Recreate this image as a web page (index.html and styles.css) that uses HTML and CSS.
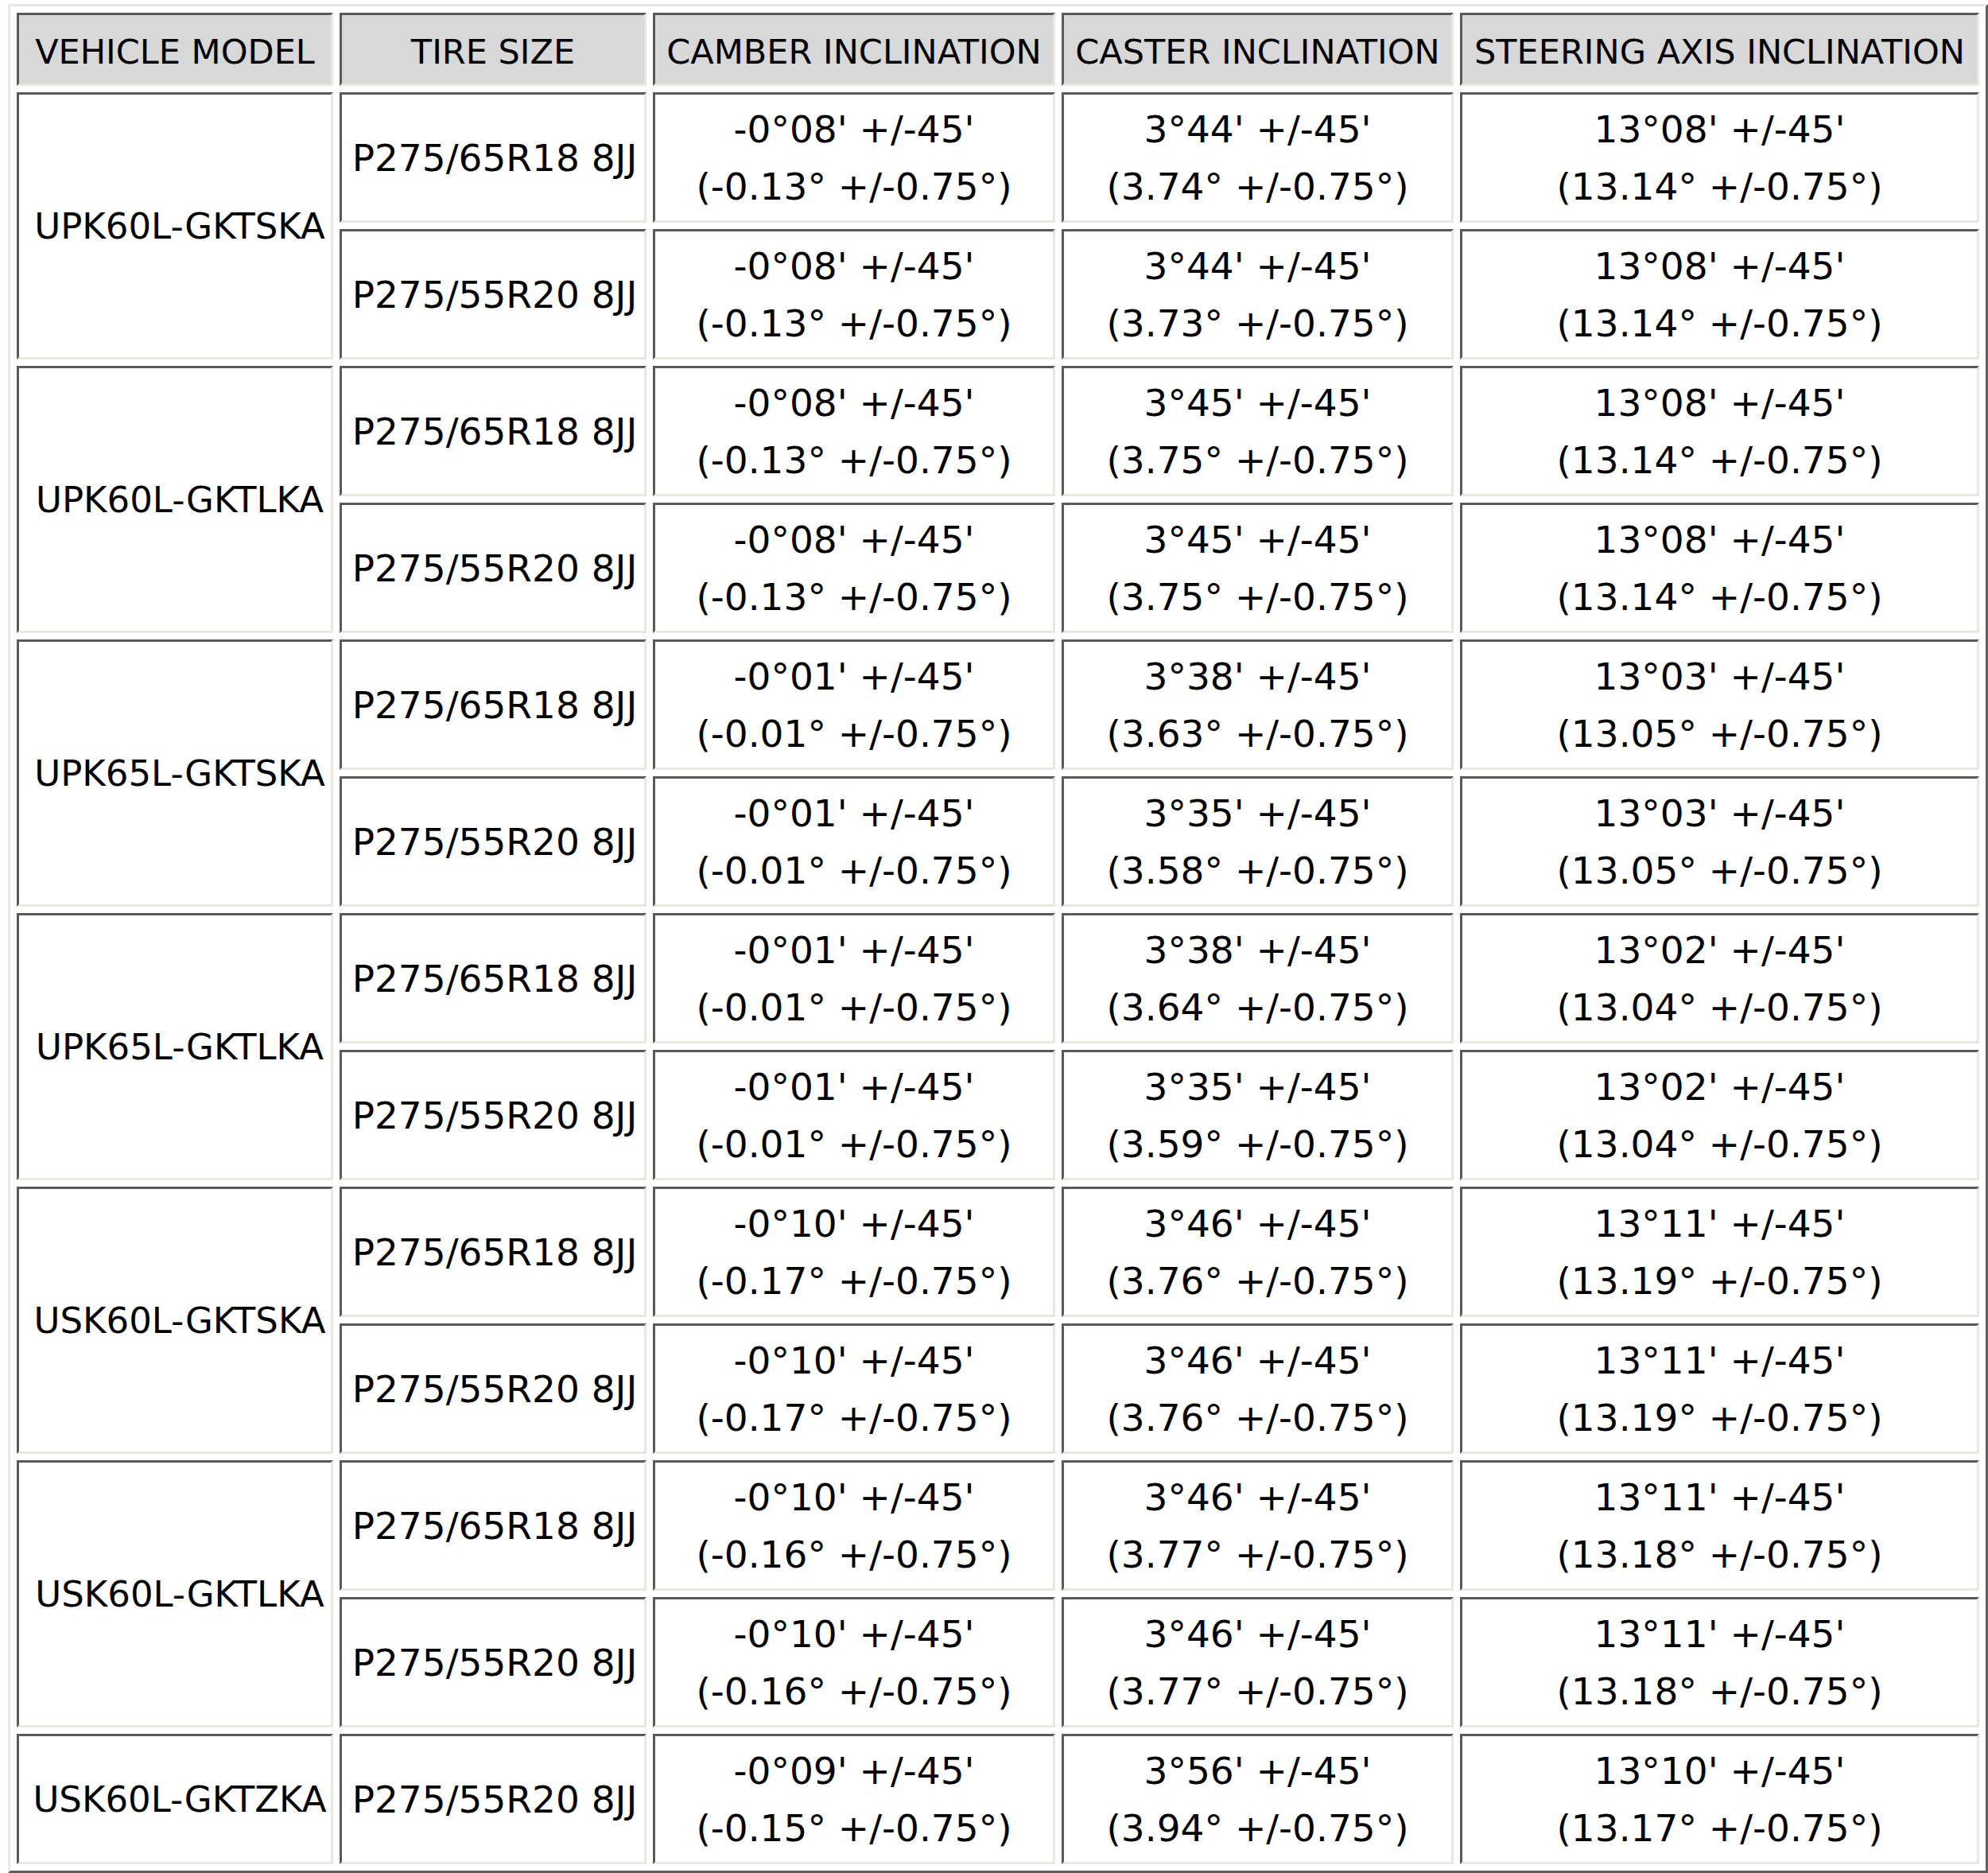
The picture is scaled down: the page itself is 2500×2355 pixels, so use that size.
FILE: index.html
```html
<!DOCTYPE html>
<html>
<head>
<meta charset="utf-8">
<link rel="stylesheet" href="styles.css">
</head>
<body>
<table class="spec">
<colgroup>
<col class="c-model"><col class="c-tire"><col class="c-camber"><col class="c-caster"><col class="c-sai">
</colgroup>
<thead>
<tr class="head">
<th>VEHICLE MODEL</th><th>TIRE SIZE</th><th>CAMBER INCLINATION</th><th>CASTER INCLINATION</th><th>STEERING AXIS INCLINATION</th>
</tr>
</thead>
<tbody>
<tr>
<td class="model" rowspan="2">UPK60L-GKTSKA</td><td class="tire">P275/65R18 8JJ</td>
<td>-0°08' +/-45'<br>(-0.13° +/-0.75°)</td><td>3°44' +/-45'<br>(3.74° +/-0.75°)</td><td>13°08' +/-45'<br>(13.14° +/-0.75°)</td>
</tr>
<tr>
<td class="tire">P275/55R20 8JJ</td>
<td>-0°08' +/-45'<br>(-0.13° +/-0.75°)</td><td>3°44' +/-45'<br>(3.73° +/-0.75°)</td><td>13°08' +/-45'<br>(13.14° +/-0.75°)</td>
</tr>
<tr>
<td class="model" rowspan="2">UPK60L-GKTLKA</td><td class="tire">P275/65R18 8JJ</td>
<td>-0°08' +/-45'<br>(-0.13° +/-0.75°)</td><td>3°45' +/-45'<br>(3.75° +/-0.75°)</td><td>13°08' +/-45'<br>(13.14° +/-0.75°)</td>
</tr>
<tr>
<td class="tire">P275/55R20 8JJ</td>
<td>-0°08' +/-45'<br>(-0.13° +/-0.75°)</td><td>3°45' +/-45'<br>(3.75° +/-0.75°)</td><td>13°08' +/-45'<br>(13.14° +/-0.75°)</td>
</tr>
<tr>
<td class="model" rowspan="2">UPK65L-GKTSKA</td><td class="tire">P275/65R18 8JJ</td>
<td>-0°01' +/-45'<br>(-0.01° +/-0.75°)</td><td>3°38' +/-45'<br>(3.63° +/-0.75°)</td><td>13°03' +/-45'<br>(13.05° +/-0.75°)</td>
</tr>
<tr>
<td class="tire">P275/55R20 8JJ</td>
<td>-0°01' +/-45'<br>(-0.01° +/-0.75°)</td><td>3°35' +/-45'<br>(3.58° +/-0.75°)</td><td>13°03' +/-45'<br>(13.05° +/-0.75°)</td>
</tr>
<tr>
<td class="model" rowspan="2">UPK65L-GKTLKA</td><td class="tire">P275/65R18 8JJ</td>
<td>-0°01' +/-45'<br>(-0.01° +/-0.75°)</td><td>3°38' +/-45'<br>(3.64° +/-0.75°)</td><td>13°02' +/-45'<br>(13.04° +/-0.75°)</td>
</tr>
<tr>
<td class="tire">P275/55R20 8JJ</td>
<td>-0°01' +/-45'<br>(-0.01° +/-0.75°)</td><td>3°35' +/-45'<br>(3.59° +/-0.75°)</td><td>13°02' +/-45'<br>(13.04° +/-0.75°)</td>
</tr>
<tr>
<td class="model" rowspan="2">USK60L-GKTSKA</td><td class="tire">P275/65R18 8JJ</td>
<td>-0°10' +/-45'<br>(-0.17° +/-0.75°)</td><td>3°46' +/-45'<br>(3.76° +/-0.75°)</td><td>13°11' +/-45'<br>(13.19° +/-0.75°)</td>
</tr>
<tr>
<td class="tire">P275/55R20 8JJ</td>
<td>-0°10' +/-45'<br>(-0.17° +/-0.75°)</td><td>3°46' +/-45'<br>(3.76° +/-0.75°)</td><td>13°11' +/-45'<br>(13.19° +/-0.75°)</td>
</tr>
<tr>
<td class="model" rowspan="2">USK60L-GKTLKA</td><td class="tire">P275/65R18 8JJ</td>
<td>-0°10' +/-45'<br>(-0.16° +/-0.75°)</td><td>3°46' +/-45'<br>(3.77° +/-0.75°)</td><td>13°11' +/-45'<br>(13.18° +/-0.75°)</td>
</tr>
<tr>
<td class="tire">P275/55R20 8JJ</td>
<td>-0°10' +/-45'<br>(-0.16° +/-0.75°)</td><td>3°46' +/-45'<br>(3.77° +/-0.75°)</td><td>13°11' +/-45'<br>(13.18° +/-0.75°)</td>
</tr>
<tr>
<td class="model">USK60L-GKTZKA</td><td class="tire">P275/55R20 8JJ</td>
<td>-0°09' +/-45'<br>(-0.15° +/-0.75°)</td><td>3°56' +/-45'<br>(3.94° +/-0.75°)</td><td>13°10' +/-45'<br>(13.17° +/-0.75°)</td>
</tr>
</tbody>
</table>
</body>
</html>
```
FILE: styles.css
```css
html, body {
  margin: 0;
  padding: 0;
  background: #ffffff;
}
body {
  padding: 5px 0 0 10px;
  font-family: "DejaVu Sans", Verdana, sans-serif;
  color: #000;
}
.spec {
  table-layout: fixed;
  width: 2490px;
  border-collapse: separate;
  border-spacing: 8px;
  border-style: solid;
  border-width: 3px;
  border-color: #ebe8e2 #5c5c5c #5c5c5c #ebe8e2;
}
.c-model { width: 398px; }
.c-tire { width: 386px; }
.c-camber { width: 506px; }
.c-caster { width: 493px; }
.c-sai { width: 653px; }
.spec th, .spec td {
  padding: 0;
  text-align: center;
  vertical-align: middle;
  white-space: nowrap;
  border-style: solid;
  border-width: 3px;
  border-color: #5a5a5a #e9e7e1 #e9e7e1 #5a5a5a;
}
.spec th {
  background: #d8d8d8;
  font-weight: normal;
  font-size: 43px;
  line-height: 52px;
  padding-top: 5px;
}
.spec td {
  background: #ffffff;
  font-size: 47px;
  line-height: 72px;
  padding-top: 2px;
}
.spec td.model {
  font-size: 45px;
  padding-left: 12px;
}
.spec td.tire {
  font-size: 47px;
  padding-left: 4px;
}
.spec tr.head { height: 92px; }
.spec tbody tr { height: 164px; }
```
